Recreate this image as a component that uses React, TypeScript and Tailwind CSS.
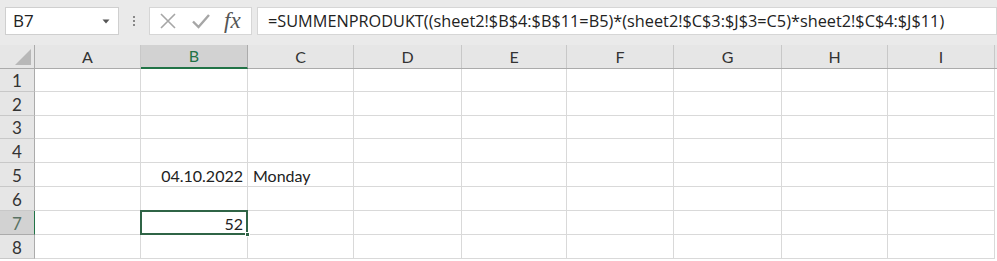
import React from "react";

const cols = [
  { l: "A", w: "w-[106px]" },
  { l: "B", w: "w-[107px]" },
  { l: "C", w: "w-[106px]" },
  { l: "D", w: "w-[108px]" },
  { l: "E", w: "w-[105px]" },
  { l: "F", w: "w-[107px]" },
  { l: "G", w: "w-[108px]" },
  { l: "H", w: "w-[106px]" },
  { l: "I", w: "w-[107px]" },
];

const rowH = ["h-[23px]", "h-[24px]", "h-[23px]", "h-[24px]", "h-[24px]", "h-[24px]", "h-[24px]", "h-[24px]"];

const font = { fontFamily: "Lato, 'Liberation Sans', sans-serif" };

function Cell({ r, c }: { r: number; c: number }) {
  const w = cols[c].w;
  let content: React.ReactNode = null;
  if (r === 5 && c === 1)
    content = <span className="absolute right-[4px] -bottom-[2px] leading-[24px]">04.10.2022</span>;
  if (r === 5 && c === 2)
    content = <span className="absolute left-[5px] -bottom-[2px] leading-[24px]">Monday</span>;
  if (r === 7 && c === 1)
    content = (
      <>
        <div className="absolute -left-[1px] -top-[1px] -right-[1px] -bottom-[1px] border-2 border-[#2f6446] z-10" />
        <div className="absolute -right-[3px] -bottom-[3px] w-[5px] h-[5px] bg-[#2f6446] border border-white z-20" />
        <span className="absolute right-[4px] -bottom-[2px] leading-[24px]">52</span>
      </>
    );
  return (
    <div className={`${w} h-full shrink-0 relative border-r border-b border-[#d9d9d9] text-[16px] text-[#222]`}>
      {content}
    </div>
  );
}

export default function App() {
  return (
    <div className="w-[997px] h-[261px] bg-white overflow-hidden" style={font}>
      {/* formula bar */}
      <div className="h-[45px] bg-[#eaeaea] flex items-start pt-[7px]">
        <div className="ml-[5px] w-[114px] h-[28px] bg-white border border-[#cfcfcf] flex items-center justify-between pl-[7px] pr-[8px]">
          <span className="text-[17px] text-[#222]" style={{ fontFamily: "'Open Sans', sans-serif" }}>B7</span>
          <svg width="8" height="5" viewBox="0 0 8 5"><path d="M0.5 0.5h7L4 4.5z" fill="#555" /></svg>
        </div>
        <div className="w-[30px] h-[28px] flex flex-col items-center justify-center gap-[2px]">
          <div className="w-[2px] h-[2px] bg-[#888]" />
          <div className="w-[2px] h-[2px] bg-[#888]" />
          <div className="w-[2px] h-[2px] bg-[#888]" />
        </div>
        <div className="w-[103px] h-[28px] bg-white border border-[#d6d6d6] flex items-center">
          <svg className="ml-[9px]" width="18" height="18" viewBox="0 0 18 18">
            <path d="M2 2L16 16M16 2L2 16" stroke="#a6a6a6" strokeWidth="1.6" />
          </svg>
          <svg className="ml-[14px]" width="20" height="18" viewBox="0 0 20 18">
            <path d="M2 9.5L7.5 15L18 3" stroke="#a6a6a6" strokeWidth="2.4" fill="none" />
          </svg>
          <span
            className="ml-[13px] text-[23px] italic text-[#555] leading-none -mt-[2px]"
            style={{ fontFamily: "'Liberation Serif', serif" }}
          >
            fx
          </span>
        </div>
        <div
          className="ml-[5px] flex-1 h-[28px] bg-white border border-[#d6d6d6] flex items-center pl-[10px] text-[16.3px] text-[#222] whitespace-nowrap"
          style={{ fontFamily: "'Open Sans', sans-serif" }}
        >
          =SUMMENPRODUKT((sheet2!$B$4:$B$11=B5)*(sheet2!$C$3:$J$3=C5)*sheet2!$C$4:$J$11)
        </div>
      </div>
      {/* column headers */}
      <div className="flex h-[24px] bg-[#e6e6e6] border-b border-[#ababab]">
        <div className="w-[35px] shrink-0 relative border-r border-[#ababab]">
          <svg className="absolute right-[3px] bottom-[3px]" width="16" height="16" viewBox="0 0 16 16">
            <path d="M16 0V16H0z" fill="#b8b8b8" />
          </svg>
        </div>
        {cols.map((c, i) => (
          <div
            key={c.l}
            className={`${c.w} shrink-0 flex items-center justify-center text-[16px] border-r ${
              i === 1
                ? "bg-[#d2d2d2] text-[#217346] border-[#ababab] border-b-2 border-b-[#217346] -mb-[1px]"
                : "text-[#333] border-[#c8c8c8]"
            }`}
          >
            {c.l}
          </div>
        ))}
      </div>
      {/* rows */}
      {rowH.map((h, ri) => {
        const r = ri + 1;
        const sel = r === 7;
        return (
          <div key={r} className={`flex ${h}`}>
            <div
              className={`w-[35px] shrink-0 flex items-center justify-center text-[17px] pt-[2px] border-b ${
                sel
                  ? "bg-[#d2d2d2] text-[#5a7264] border-r border-r-[#217346] border-b-[#ababab]"
                  : "bg-[#e6e6e6] text-[#333] border-r border-r-[#ababab] border-b-[#c8c8c8]"
              }`}
            >
              {r}
            </div>
            {cols.map((_, ci) => (
              <Cell key={ci} r={r} c={ci} />
            ))}
          </div>
        );
      })}
    </div>
  );
}
